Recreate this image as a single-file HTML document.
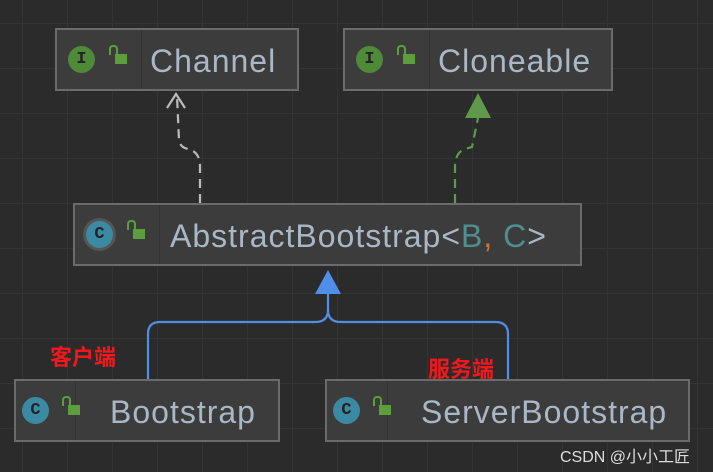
<!DOCTYPE html><html><head><style>
body{margin:0;width:713px;height:472px;overflow:hidden;background:#2b2b2b;
background-image:linear-gradient(#343434 1px,transparent 1px),linear-gradient(90deg,#343434 1px,transparent 1px);
background-size:45px 45px;background-position:22px 23px;position:relative;font-family:"Liberation Sans","DejaVu Sans",sans-serif}
.b{position:absolute;background:#3c3c3c;border:2px solid #6b6b6b;box-sizing:border-box;height:63px}
.sep{position:absolute;top:0;bottom:0;width:1px;background:#333}
.t{position:absolute;top:13px;font-size:32px;color:#a9b7c6;font-family:"Liberation Sans",sans-serif;letter-spacing:1px;white-space:nowrap}
.ic{position:absolute;top:16px;width:27px;height:27px;border-radius:50%;color:#222;font-size:17px;text-align:center;line-height:27px;font-weight:bold;font-family:"Liberation Mono",monospace}
.g{background:#4f8a3a}.c{background:#3b8aa3}
.lk{position:absolute;top:24px;width:12px;height:10px;background:#5c9e3c}
.lk:before{content:"";position:absolute;left:-6px;top:-9px;width:5px;height:8px;border:2px solid #5c9e3c;border-bottom:none;border-radius:4px 4px 0 0}
.r{position:absolute;color:#f0181c;font-weight:bold;font-size:22px;font-family:"Noto Sans CJK SC",sans-serif;line-height:1}
</style></head><body>
<svg width="713" height="472" style="position:absolute;left:0;top:0">
<path d="M200 203 V165 Q199 152 190 150 L185 148 Q180 146 179 140 L177 96" stroke="#bbb" stroke-width="2.2" fill="none" stroke-dasharray="9 6"/>
<path d="M167 108 L176 94 L185 108" stroke="#bbb" stroke-width="2.2" fill="none"/>
<path d="M455 203 V165 Q456 152 465 149 L472 147 L478 118" stroke="#5f9a4a" stroke-width="2.2" fill="none" stroke-dasharray="9 6"/>
<path d="M465 118 L478 93 L491 118 Z" fill="#5f9a4a"/>
<path d="M328 290 V310 Q328 322 315 322 H160 Q148 322 148 334 V379 M328 310 Q328 322 341 322 H495 Q508 322 508 334 V379" stroke="#4f8fe8" stroke-width="2.2" fill="none"/>
<path d="M315 294 L328 270 L341 294 Z" fill="#4f8fe8"/>
</svg>
<div class="b" style="left:55px;top:28px;width:244px"><div class="sep" style="left:84px"></div><div class="ic g" style="left:11px">I</div><div class="lk" style="left:58px"></div><div class="t" style="left:93px">Channel</div></div>
<div class="b" style="left:343px;top:28px;width:270px"><div class="sep" style="left:84px"></div><div class="ic g" style="left:11px">I</div><div class="lk" style="left:58px"></div><div class="t" style="left:93px">Cloneable</div></div>
<div class="b" style="left:73px;top:203px;width:509px"><div class="sep" style="left:84px"></div><div class="ic c" style="left:11px;box-shadow:0 0 0 3px #555">C</div><div class="lk" style="left:58px"></div><div class="t" style="left:95px">AbstractBootstrap&lt;<span style="color:#4f8f8f">B</span><span style="color:#cc7832">,</span> <span style="color:#4f8f8f">C</span>&gt;</div></div>
<div class="b" style="left:14px;top:379px;width:266px"><div class="sep" style="left:59px"></div><div class="ic c" style="left:6px">C</div><div class="lk" style="left:52px"></div><div class="t" style="left:94px">Bootstrap</div></div>
<div class="b" style="left:325px;top:379px;width:365px"><div class="sep" style="left:60px"></div><div class="ic c" style="left:6px">C</div><div class="lk" style="left:52px"></div><div class="t" style="left:94px">ServerBootstrap</div></div>
<div class="r" style="left:50px;top:345px">客户端</div>
<div class="r" style="left:428px;top:357px">服务端</div>
<div style="position:absolute;left:560px;top:443px;color:#ddd;font-size:16px;font-family:'Liberation Sans','Noto Sans CJK SC',sans-serif">CSDN @小小工匠</div>
</body></html>
